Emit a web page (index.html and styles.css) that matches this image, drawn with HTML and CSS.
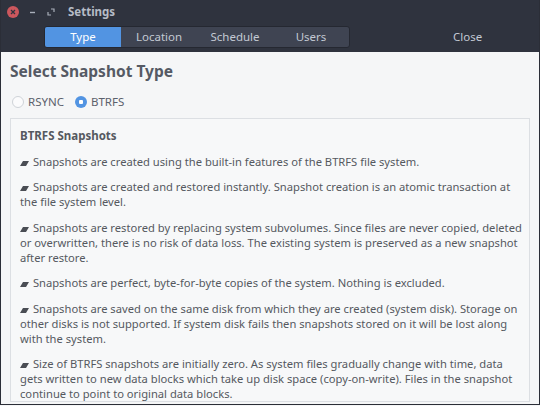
FILE: index.html
```html
<!DOCTYPE html>
<html>
<head>
<meta charset="utf-8">
<link rel="stylesheet" href="styles.css">
</head>
<body>
<div class="window">
  <header class="header">
    <div class="titlebar">
      <span class="btn-close"><svg width="12" height="12" viewBox="0 0 12 12"><circle cx="6" cy="6" r="6" fill="#cc575d"/><path d="M4 4L8 8M8 4L4 8" stroke="#2f343f" stroke-width="1.3"/></svg></span>
      <span class="btn-min"><svg width="10" height="10" viewBox="0 0 10 10"><path d="M2 5.5H7" stroke="#a9afba" stroke-width="1.4"/></svg></span>
      <span class="btn-max"><svg width="10" height="10" viewBox="0 0 10 10"><path d="M5 2H8V5" fill="none" stroke="#a9afba" stroke-width="1.2"/><path d="M2 5V8H5" fill="none" stroke="#a9afba" stroke-width="1.2"/></svg></span>
      <span class="title">Settings</span>
    </div>
    <div class="toolbar">
      <div class="tabs">
        <span class="tab active">Type</span>
        <span class="tab">Location</span>
        <span class="tab">Schedule</span>
        <span class="tab">Users</span>
      </div>
      <span class="close-text">Close</span>
    </div>
  </header>
  <main class="content">
    <h1 class="heading">Select Snapshot Type</h1>
    <div class="radios">
      <label class="radio"><span class="dot"></span>RSYNC</label>
      <label class="radio checked"><span class="dot"></span>BTRFS</label>
    </div>
    <div class="box">
      <p class="box-title">BTRFS Snapshots</p>
      <p><svg class="b" width="9" height="5" viewBox="0 0 9 5"><polygon points="3,0 9,0 6,5 0,5"/></svg> Snapshots are created using the built-in features of the BTRFS file system.</p>
      <p><svg class="b" width="9" height="5" viewBox="0 0 9 5"><polygon points="3,0 9,0 6,5 0,5"/></svg> Snapshots are created and restored instantly. Snapshot creation is an atomic transaction at<br>the file system level.</p>
      <p><svg class="b" width="9" height="5" viewBox="0 0 9 5"><polygon points="3,0 9,0 6,5 0,5"/></svg> Snapshots are restored by replacing system subvolumes. Since files are never copied, deleted<br>or overwritten, there is no risk of data loss. The existing system is preserved as a new snapshot<br>after restore.</p>
      <p><svg class="b" width="9" height="5" viewBox="0 0 9 5"><polygon points="3,0 9,0 6,5 0,5"/></svg> Snapshots are perfect, byte-for-byte copies of the system. Nothing is excluded.</p>
      <p><svg class="b" width="9" height="5" viewBox="0 0 9 5"><polygon points="3,0 9,0 6,5 0,5"/></svg> Snapshots are saved on the same disk from which they are created (system disk). Storage on<br>other disks is not supported. If system disk fails then snapshots stored on it will be lost along<br>with the system.</p>
      <p><svg class="b" width="9" height="5" viewBox="0 0 9 5"><polygon points="3,0 9,0 6,5 0,5"/></svg> Size of BTRFS snapshots are initially zero. As system files gradually change with time, data<br>gets written to new data blocks which take up disk space (copy-on-write). Files in the snapshot<br>continue to point to original data blocks.</p>
    </div>
  </main>
</div>
</body>
</html>
```

FILE: styles.css
```css
* { box-sizing: border-box; }
html, body { margin: 0; padding: 0; }
body {
  width: 540px;
  height: 406px;
  overflow: hidden;
  background: #f5f6f7;
  font-family: "Noto Sans", "DejaVu Sans", sans-serif;
}
.window {
  width: 540px;
  height: 405px;
  border: 1px solid #2b2e37;
  border-top: none;
  display: flex;
  flex-direction: column;
  overflow: hidden;
}
.header {
  background: #2f333e;
  height: 52px;
  flex: none;
  display: flex;
  flex-direction: column;
}
.titlebar {
  height: 23px;
  display: flex;
  align-items: center;
  padding-left: 6px;
}
.titlebar svg { display: block; }
.btn-close { width: 12px; height: 12px; margin-right: 9px; }
.btn-min { width: 10px; height: 10px; margin-right: 8px; }
.btn-max { width: 10px; height: 10px; margin-right: 12px; }
.title {
  color: #b6bcc6;
  font-size: 11.5px;
  font-weight: bold;
}
.toolbar {
  display: flex;
  align-items: center;
  padding-top: 3px;
}
.tabs {
  margin-left: 43px;
  display: flex;
  border: 1px solid #252831;
  border-radius: 3px;
  background: #3f4452;
  height: 22px;
}
.tab {
  width: 76px;
  text-align: center;
  font-size: 11.5px;
  line-height: 20px;
  color: #c3c9d3;
}
.tab.active {
  background: #5294e2;
  color: #ffffff;
  border-radius: 2px 0 0 2px;
}
.close-text {
  margin-left: 103px;
  font-size: 11.5px;
  line-height: 20px;
  color: #c3c9d3;
}
.content {
  flex: 1;
  padding: 8px 9px 2px 9px;
  display: flex;
  flex-direction: column;
  color: #5c616c;
  overflow: hidden;
}
.heading {
  margin: 0;
  font-size: 15.5px;
  line-height: 22px;
  font-weight: bold;
  color: #555a64;
}
.radios {
  display: flex;
  margin-top: 12px;
  gap: 11px;
  padding-left: 2px;
}
.radio {
  display: flex;
  align-items: center;
  font-size: 11.5px;
  line-height: 16px;
  color: #5c616c;
}
.dot {
  width: 12px;
  height: 12px;
  border-radius: 50%;
  border: 1px solid #cfd3d8;
  background: #fbfbfc;
  margin-right: 4px;
  flex: none;
}
.radio.checked .dot {
  border: none;
  background: radial-gradient(circle, #ffffff 0 2px, #5294e2 2.5px);
}
.box {
  margin-top: 8px;
  border: 1px solid #dcdfe3;
  background: #f7f8f9;
  padding: 9px 9px 0 9px;
  flex: 1;
  overflow: hidden;
}
.box p {
  margin: 0 0 10.5px 0;
  font-size: 11.2px;
  line-height: 15px;
  color: #55595f;
  white-space: nowrap;
}
.box .box-title {
  font-weight: bold;
  font-size: 11.5px;
}
.b {
  fill: #4a4d54;
  vertical-align: 0px;
  margin-right: 1px;
}
```
